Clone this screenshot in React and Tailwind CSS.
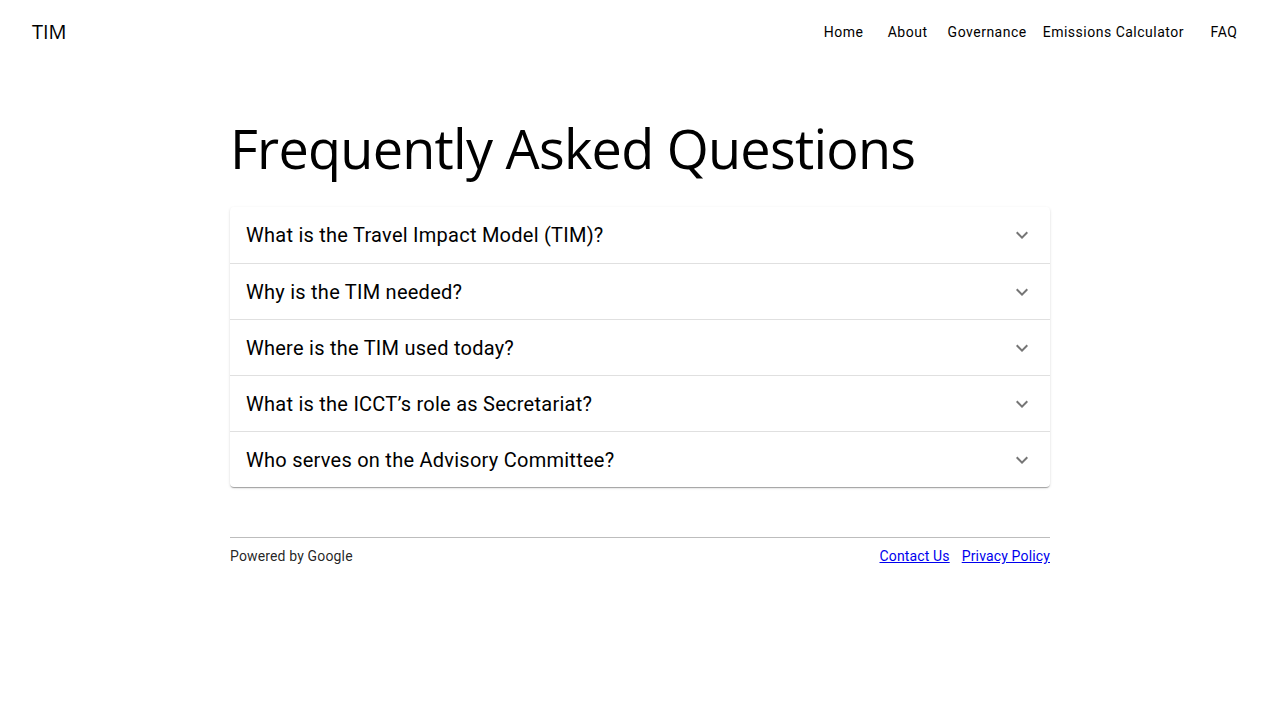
import React from "react";

const questions = [
  "What is the Travel Impact Model (TIM)?",
  "Why is the TIM needed?",
  "Where is the TIM used today?",
  "What is the ICCT\u2019s role as Secretariat?",
  "Who serves on the Advisory Committee?",
];

const nav = ["Home", "About", "Governance", "Emissions Calculator", "FAQ"];

function Chevron() {
  return (
    <svg viewBox="0 0 24 24" width="24" height="24" fill="rgba(0,0,0,0.54)">
      <path d="M16.59 8.59 12 13.17 7.41 8.59 6 10l6 6 6-6z" />
    </svg>
  );
}

export default function App() {
  return (
    <div className="min-h-[720px] bg-white text-black" style={{ fontFamily: "Roboto, sans-serif" }}>
      <header className="flex h-16 items-center justify-between pl-8 pr-6">
        <div className="text-[20px] font-['Open_Sans',sans-serif]">TIM</div>
        <nav className="flex">
          {nav.map((n) => (
            <a
              key={n}
              className="flex min-w-16 justify-center px-2 py-1.5 text-[14px] font-normal leading-[24px] tracking-[0.5px] text-black"
            >
              {n}
            </a>
          ))}
        </nav>
      </header>
      <main className="mx-auto w-[820px]">
        <h1 className="mt-[44px] mb-[19px] text-[54px] leading-[80px] font-['Open_Sans',sans-serif] font-normal tracking-[-0.75px]">
          Frequently Asked Questions
        </h1>
        <div className="rounded-[4px] shadow-[0_2px_1px_-1px_rgba(0,0,0,0.2),0_1px_1px_0_rgba(0,0,0,0.14),0_1px_3px_0_rgba(0,0,0,0.12)]">
          {questions.map((q, i) => (
            <div
              key={q}
              className={`flex h-14 items-center justify-between px-4 ${i > 0 ? "border-t border-[rgba(0,0,0,0.12)]" : ""}`}
            >
              <span className="text-[20px] font-normal tracking-[0.25px] text-black">{q}</span>
              <Chevron />
            </div>
          ))}
        </div>
        <footer className="mt-[50px] border-t border-[#bdbdbd] pt-[8px] flex justify-between text-[14px] leading-[20px] tracking-[0.15px] text-[rgba(0,0,0,0.87)]">
          <span>Powered by Google</span>
          <div className="flex gap-3">
            <a className="text-[#0000ee] underline" href="#">Contact Us</a>
            <a className="text-[#0000ee] underline" href="#">Privacy Policy</a>
          </div>
        </footer>
      </main>
    </div>
  );
}
